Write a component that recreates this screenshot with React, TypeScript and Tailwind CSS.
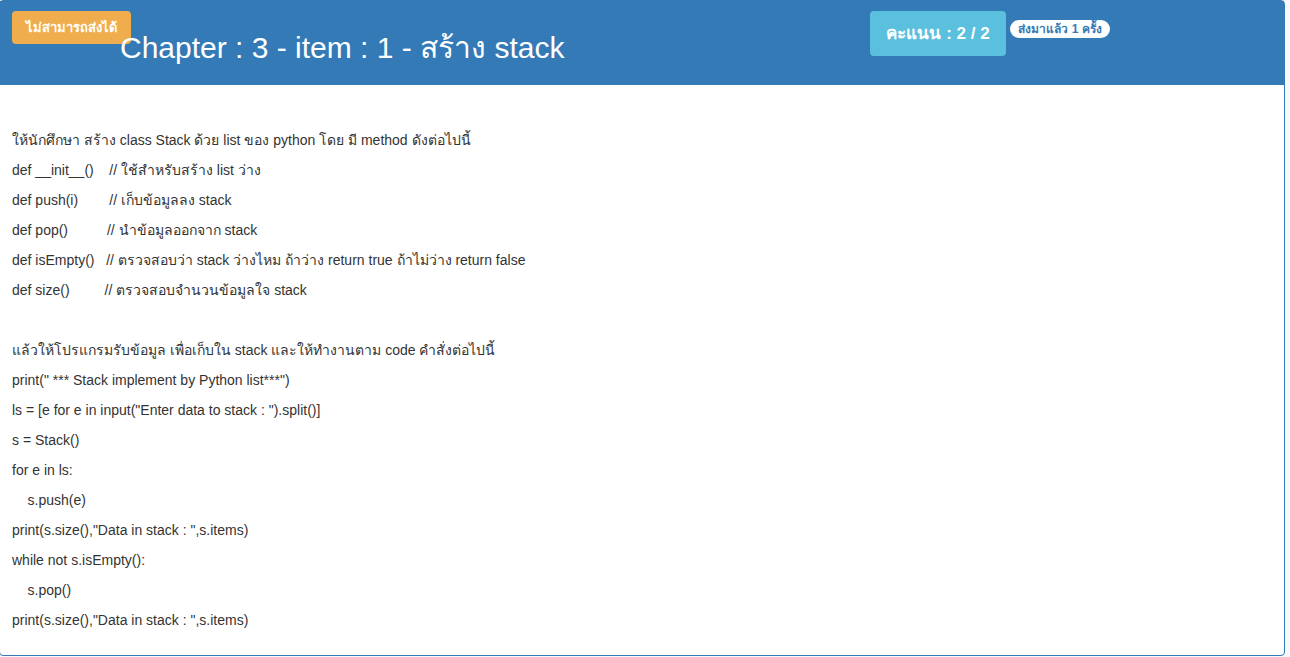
const lines1 = [
  "ให้นักศึกษา สร้าง class Stack ด้วย list ของ python โดย มี method ดังต่อไปนี้",
  "def __init__()    // ใช้สำหรับสร้าง list ว่าง",
  "def push(i)        // เก็บข้อมูลลง stack",
  "def pop()          // นำข้อมูลออกจาก stack",
  "def isEmpty()   // ตรวจสอบว่า stack ว่างไหม ถ้าว่าง return true ถ้าไม่ว่าง return false",
  "def size()         // ตรวจสอบจำนวนข้อมูลใจ stack",
  "",
  "แล้วให้โปรแกรมรับข้อมูล เพื่อเก็บใน stack และให้ทำงานตาม code คำสั่งต่อไปนี้",
  'print(" *** Stack implement by Python list***")',
  'ls = [e for e in input("Enter data to stack : ").split()]',
  "s = Stack()",
  "for e in ls:",
  "    s.push(e)",
  'print(s.size(),"Data in stack : ",s.items)',
  "while not s.isEmpty():",
  "    s.pop()",
  'print(s.size(),"Data in stack : ",s.items)',
];

const App = () => {
  return (
    <div
      className="flex min-h-[657px] w-full overflow-hidden bg-[#f8f9fc]"
      style={{ fontFamily: '"Liberation Sans", Arial, "DejaVu Sans", sans-serif' }}
    >
      <div className="ml-[-1px] mb-[1px] flex h-[656px] w-[1286px] shrink-0 flex-col rounded-[4px] border border-[#337ab7] bg-white">
        <div className="flex h-[84px] shrink-0 bg-[#337ab7] pl-[12px] pt-[10px]">
          <div className="flex w-[858px] shrink-0 items-start">
            <div className="flex h-[33px] w-[119px] shrink-0 items-center justify-center rounded-[4px] bg-[#f0ad4e] text-[13px] font-bold whitespace-nowrap text-white">
              ไม่สามารถส่งได้
            </div>
            <h1 className="ml-[-11px] mt-[19px] text-[30px] leading-[36px] font-normal whitespace-nowrap text-white">
              Chapter : 3 - item : 1 - สร้าง stack
            </h1>
          </div>
          <div className="flex h-[45px] w-[136px] shrink-0 items-center justify-center rounded-[4px] bg-[#5bc0de] text-[17px] font-bold whitespace-nowrap text-white">
            คะแนน : 2 / 2
          </div>
          <div className="ml-[4px] mt-[9px] flex h-[18px] w-[100px] shrink-0 items-center justify-center rounded-full bg-white text-[12px] font-bold whitespace-nowrap text-[#337ab7]">
            ส่งมาแล้ว 1 ครั้ง
          </div>
        </div>
        <div className="px-[12px] pt-[45px] text-[14px] leading-[20px] text-[#333]">
          {lines1.map((l, i) => (
            <p key={i} className="mb-[10px] h-[20px] whitespace-pre">
              {l}
            </p>
          ))}
        </div>
      </div>
    </div>
  );
};

export default App;
